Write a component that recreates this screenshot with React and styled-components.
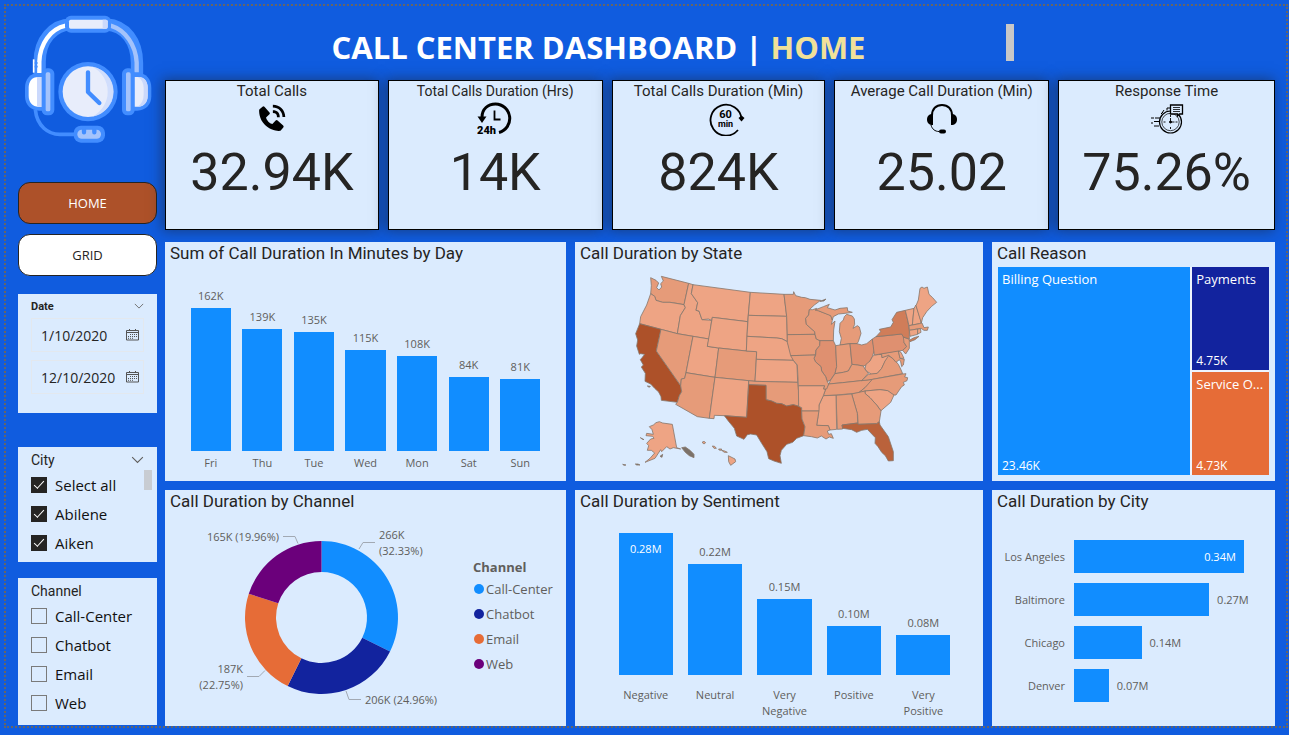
import React from "react";
import styled, { createGlobalStyle, css } from "styled-components";
import { BiSolidPhoneCall } from "react-icons/bi";

const c = {
  page: "#105cdf",
  panel: "#dbebfe",
  ink: "#252423",
  muted: "#605e5c",
  azure: "#118dff",
  navy: "#12239e",
  orange: "#e66c37",
  purple: "#6b007b",
  rust: "#ad5129",
};

const din = `Roboto, "Liberation Sans", sans-serif`;
const ui = `"Open Sans", "Noto Sans", sans-serif`;

const GlobalStyle = createGlobalStyle`
  *, *::before, *::after { box-sizing: border-box; }
  body { margin: 0; background: ${c.page}; font-family: ${ui}; color: ${c.ink}; }
  h1, h2, p, ul, fieldset { margin: 0; padding: 0; border: 0; min-width: 0; }
  ul { list-style: none; }
  svg { display: block; }
`;

const Page = styled.div`
  min-height: 100vh;
  padding: 4px 1px 7px 4px;
`;

const Frame = styled.div`
  display: flex;
  gap: 8px;
  border: 2px dotted #666566;
  padding: 0 11px 0 12px;
`;

/* ---------- sidebar ---------- */

const Sidebar = styled.aside`
  flex: none;
  width: 139px;
  display: flex;
  flex-direction: column;
`;

const LogoBox = styled.div`
  padding: 7px 5px 35px;
`;

const Nav = styled.nav`
  display: flex;
  flex-direction: column;
  gap: 10px;
  margin-bottom: 18px;
`;

const NavButton = styled.button`
  height: 42px;
  border: 1px solid ${c.ink};
  border-radius: 12px;
  font: 13px ${ui};
  cursor: pointer;
  background: ${(p) => (p.$active ? c.rust : "#fff")};
  color: ${(p) => (p.$active ? "#fff" : c.ink)};
`;

const Slicer = styled.fieldset`
  position: relative;
  margin-bottom: ${(p) => p.$gap || 0}px;
  padding: 3px 13px ${(p) => p.$bottom}px;
  background: ${c.panel};
`;

const SlicerHead = styled.div`
  display: flex;
  align-items: center;
  justify-content: space-between;
  height: ${(p) => (p.$small ? 18 : 20)}px;
  font: ${(p) => (p.$small ? "700 11px" : "400 14px")} ${din};
`;

const DateField = styled.label`
  display: flex;
  align-items: center;
  height: 34px;
  margin: 3px 0 8px;
  padding: 0 4px 0 9px;
  border: 1px solid #e3e8ee;
  &:last-child { margin-bottom: 0; }
`;

const DateInput = styled.input`
  flex: 1;
  width: 80px;
  min-width: 0;
  padding: 0;
  border: 0;
  background: none;
  font: 14px ${ui};
  color: ${c.ink};
`;

const Option = styled.label`
  display: flex;
  align-items: center;
  gap: 8px;
  height: 29px;
  font-size: 15px;
  color: #111;
  white-space: nowrap;
`;

const Check = styled.input`
  appearance: none;
  flex: none;
  display: grid;
  place-items: center;
  width: 16px;
  height: 16px;
  margin: 0;
  border: 1px solid #7a7a7a;
  &:checked { background: ${c.ink}; border-color: ${c.ink}; }
  &:checked::after {
    content: "";
    width: 10px;
    height: 5px;
    margin-bottom: 3px;
    border: solid #fff;
    border-width: 0 0 1px 1px;
    transform: rotate(-47deg);
  }
`;

const SlicerThumb = styled.span`
  position: absolute;
  top: 23px;
  right: 5px;
  width: 8px;
  height: 20px;
  background: #c8ccd2;
`;

/* ---------- main ---------- */

const Main = styled.main`
  flex: 1;
  min-width: 0;
`;

const Header = styled.header`
  display: flex;
  align-items: flex-start;
  justify-content: space-between;
  width: 61.5%;
  height: 74px;
  margin-left: 15%;
  padding-top: 18px;
`;

const Title = styled.h1`
  font: 700 31px/46px ${ui};
  color: #fff;
  white-space: nowrap;
`;

const Accent = styled.span`
  color: #f0e199;
`;

const TitleThumb = styled.span`
  width: 8px;
  height: 37px;
  background: #c8c8c8;
`;

const KpiRow = styled.section`
  display: grid;
  grid-template-columns: 214fr 215fr 214fr 215fr 217fr;
  gap: 9px;
  margin-bottom: 12px;
`;

const KpiCard = styled.article`
  display: flex;
  flex-direction: column;
  align-items: center;
  height: 150px;
  border: 1px solid #000;
  background: ${c.panel};
  box-shadow: -2px 0 12px 1px rgba(30, 34, 40, 0.5);
`;

const KpiTitle = styled.h2`
  font: 400 ${(p) => (p.$small ? 14 : 15)}px/20px ${din};
  white-space: nowrap;
`;

const KpiIcon = styled.div`
  display: grid;
  place-items: center;
  height: 35px;
  color: #000;
`;

const KpiValue = styled.p`
  font: 400 52px/74px ${din};
`;

const Panels = styled.section`
  display: grid;
  grid-template-columns: 401fr 408fr 283fr;
  grid-template-rows: minmax(239px, auto) minmax(236px, auto);
  gap: 9px;
`;

const PanelBox = styled.article`
  display: flex;
  flex-direction: column;
  min-width: 0;
  background: ${c.panel};
`;

const PanelTitle = styled.h2`
  padding: 0 5px;
  font: 400 17px/22px ${din};
`;

const Columns = styled.ul`
  display: flex;
  padding: ${(p) => p.$pad};
`;

const Column = styled.li`
  flex: 1;
  min-width: 0;
  font-size: 11px;
  line-height: 16px;
  text-align: center;
  color: ${c.muted};
`;

const Plot = styled.div`
  display: flex;
  flex-direction: column;
  justify-content: flex-end;
  align-items: center;
  height: ${(p) => p.$height}px;
`;

const ValueLabel = styled.span`
  margin-bottom: 4px;
`;

const Bar = styled.div`
  width: 78%;
  padding-top: 8px;
  background: ${c.azure};
  color: #fff;
`;

const AxisLabel = styled.div`
  margin-top: ${(p) => p.$gap}px;
  padding: 0 4px;
`;

const MapBox = styled.div`
  padding: 1px 33px 0 45px;
`;

const Treemap = styled.div`
  flex: 1;
  display: grid;
  grid-template: 1fr 1fr / 193fr 77fr;
  gap: 2px;
  margin: 3px 6px 6px;
  background: #eef4fd;
`;

const Tile = styled.div`
  display: flex;
  flex-direction: column;
  justify-content: space-between;
  min-width: 0;
  padding: 2px 4px 0;
  background: ${(p) => p.$color};
  color: #fff;
  font-size: 12px;
  line-height: 18px;
  ${(p) => p.$tall && css`grid-row: span 2;`}
`;

const TileName = styled.span`
  font-size: 13px;
  line-height: 20px;
  white-space: nowrap;
`;

const DonutBody = styled.div`
  display: flex;
  color: ${c.muted};
`;

const Legend = styled.div`
  padding: 46px 0 0 8px;
  font-size: 13px;
  line-height: 18px;
`;

const LegendTitle = styled.p`
  font-weight: 700;
`;

const LegendItem = styled.li`
  display: flex;
  align-items: center;
  gap: 2px;
  height: 25px;
  white-space: nowrap;
  &::before {
    content: "";
    width: 10px;
    height: 10px;
    margin-left: 1px;
    border-radius: 50%;
    background: ${(p) => p.$color};
  }
`;

const Rows = styled.ul`
  display: flex;
  flex-direction: column;
  gap: 10px;
  padding: 28px 8px 0 0;
`;

const Row = styled.li`
  display: grid;
  grid-template-columns: 73px 1fr;
  gap: 9px;
  align-items: center;
  height: 33px;
  font-size: 11px;
  color: ${c.muted};
`;

const RowName = styled.span`
  text-align: right;
  white-space: nowrap;
`;

const Track = styled.div`
  display: flex;
  align-items: center;
  gap: 8px;
`;

const RowBar = styled.div`
  flex: none;
  height: 33px;
  padding-right: 8px;
  line-height: 33px;
  text-align: right;
  color: #fff;
  background: ${c.azure};
`;

/* ---------- drawings ---------- */

const Logo = () => (
  <svg width="130" height="134" viewBox="70 40 390 402" aria-hidden="true">
    <g fill="none" strokeLinecap="butt">
      <path d="M120 224V186C120 122 160 75 215 74H320C378 78 412 126 412 190V224" stroke="#428dff" strokeWidth="37" />
      <path d="M119 220V186C121 132 152 88 198 78" stroke="#fff" strokeWidth="13" />
      <path d="M411 218V188C408 136 378 92 333 78" stroke="#a4c3fb" strokeWidth="13" />
      <path d="M107 330C112 380 146 404 180 404H230" stroke="#428dff" strokeWidth="11" />
      <path d="M102 179V219" stroke="#fff" strokeWidth="5" />
      <path d="M105 190H114M105 201H114" stroke="#428dff" strokeWidth="5" />
    </g>
    <rect x="196" y="48" width="138" height="51" rx="18" fill="#428dff" />
    <rect x="208" y="60" width="116" height="27" rx="5" fill="#e8edfb" />
    <path d="M309 60h10q5 0 5 5v17q0 5-5 5h-10z" fill="#cbd9fc" />
    <path d="M131 220H118C92 220 76 238 76 264v26c0 26 18 43 42 43h13z" fill="#428dff" />
    <path d="M128 232H116C96 232 87 246 87 264v24c0 20 12 33 29 33h12z" fill="#fff" />
    <path d="M128 232h-16v89h16z" fill="#cbd9fc" />
    <rect x="126" y="206" width="38" height="141" rx="16" fill="#428dff" />
    <rect x="138" y="218" width="14" height="117" rx="5" fill="#a4c3fb" />
    <path d="M400 220h13c26 0 42 18 42 44v26c0 26-18 43-42 43h-13z" fill="#428dff" />
    <path d="M404 232h11c20 0 29 14 29 32v24c0 20-12 33-29 33h-11z" fill="#e8edfb" />
    <path d="M415 232c20 0 29 14 29 32v24c0 20-12 33-29 33 11-8 17-20 17-37v-18c0-16-6-27-17-34z" fill="#cbd9fc" />
    <rect x="367" y="206" width="38" height="141" rx="16" fill="#428dff" />
    <rect x="379" y="218" width="14" height="117" rx="5" fill="#a4c3fb" />
    <circle cx="265" cy="276" r="89" fill="#428dff" />
    <circle cx="265" cy="276" r="76" fill="#e8edfb" />
    <path d="M278 201a76 76 0 0 1 0 150a84 84 0 0 0 0-150" fill="#cbd9fc" opacity=".8" />
    <path d="M265 218v59l34 33" fill="none" stroke="#428dff" strokeWidth="13" strokeLinecap="round" strokeLinejoin="round" />
    <rect x="222" y="378" width="94" height="51" rx="22" fill="#428dff" />
    <rect x="233" y="390" width="71" height="27" rx="13" fill="#a4c3fb" />
    <path d="M253 387v11M284 387v11" stroke="#428dff" strokeWidth="13" strokeLinecap="round" />
  </svg>
);

const Chevron = ({ size }) => (
  <svg width={size} height={size / 2 + 1} viewBox="0 0 12 7" fill="none" stroke="#605e5c" aria-hidden="true">
    <path d="M1 1l5 5 5-5" />
  </svg>
);

const Calendar = () => (
  <svg width="13" height="12" viewBox="0 0 13 12" fill="none" stroke="#555" aria-hidden="true">
    <path d="M.5 1.500h12v9.500H.5zM.5 3.500h12M3.500 0v2M9.500 0v2" />
    <path d="M4 5.500h7M2 7.500h9M2 9.300h6" strokeDasharray="1 1" />
  </svg>
);

const Day24Icon = () => (
  <svg width="36" height="36" viewBox="0 0 36 36" aria-hidden="true">
    <path d="M5 16C5 8 11 3 18.500 3A14.500 14.500 0 0 1 22 31.500" fill="none" stroke="#000" strokeWidth="3" />
    <path d="M.5 15.500h9L5 22z" />
    <path d="M17.500 9.500v9h6" fill="none" stroke="#000" strokeWidth="1.800" />
    <text x="0" y="33" fontFamily={din} fontWeight="900" fontSize="11">24h</text>
  </svg>
);

/* The artwork sits in the right part of a wider canvas, as in the card's source image. */
const Min60Icon = () => (
  <svg width="54" height="34" viewBox="-18 0 54 34" aria-hidden="true">
    <path d="M29 28A15.500 15.500 0 1 1 32.500 17" fill="none" stroke="#000" strokeWidth="1.800" />
    <path d="M29.500 16l3-2.500 3 2.500-3 3.500z" />
    <g fontFamily={din} fontWeight="700" textAnchor="middle">
      <text x="16.500" y="16" fontSize="11">60</text>
      <text x="16.500" y="25" fontSize="9">min</text>
    </g>
  </svg>
);

const HeadsetIcon = () => (
  <svg width="32" height="30" viewBox="0 0 32 30" aria-hidden="true">
    <path d="M6 13V11.500C6 5 10 1 16 1s10 4 10 10.500V13" fill="none" stroke="#000" strokeWidth="2" />
    <path d="M7 10v11C3 21 1 19 1 15.500S3 10 7 10zM25 10v11c4 0 6-2 6-5.500S29 10 25 10z" />
    <path d="M5 21c1 4 4 6.500 8 6.500" fill="none" stroke="#000" strokeWidth="1" />
    <rect x="13" y="25.500" width="7" height="4" rx="2" />
  </svg>
);

const StopwatchIcon = () => (
  <svg width="34" height="30" viewBox="0 0 34 30" fill="none" stroke="#000" aria-hidden="true">
    <circle cx="20.500" cy="18" r="11" strokeWidth="1.200" />
    <circle cx="20.500" cy="18" r="8.700" strokeWidth=".7" />
    <path d="M20.500 11v2M20.500 23v2M13.500 18h2M25.500 18h2M20.500 14v4h4" strokeWidth=".9" />
    <circle cx="20.500" cy="18" r="1" fill="#000" />
    <path d="M11 10l2-2M14 6l-2 3M17 6.500V4h3M1 14h3m1 0h5M4 17.500h5M1 19h2M4 22h5" strokeWidth="1" />
    <path d="M20.500 1h12v9h-3l-2 2v-2h-7z" fill={c.panel} strokeWidth="1.300" />
    <path d="M23 3.500h7M23 5.500h7M23 7.500h7" strokeWidth=".8" />
  </svg>
);

const light = "#eea484";
const mid = "#e69b79";
const deep = "#df9070";

/* Outlines of the states in map units, with the tone of each. */
const states = [
  [mid, "92,38 108,46 116,54 110,68 117,75 125,66 122,56 130,48 124,34 206,55 192,119 170,115 150,112 128,112 108,106 104,94 92,86 94,62"],
  [light, "92,86 104,94 108,106 128,112 150,112 192,119 196,128 181,152 172,206 123,193 59,176 62,155 80,120"],
  [c.rust, "59,176 123,193 109,258 182,362 185,380 178,392 172,412 124,406 123,395 116,381 104,370 92,357 75,349 76,325 64,306 70,300 61,284 66,278 74,268 62,266 58,268 50,243 53,225 47,206"],
  [light, "206,55 219,59 214,86 233,113 228,136 237,138 246,164 275,166 267,222 219,214 172,206 181,152 196,128 192,119"],
  [mid, "123,193 172,206 219,214 198,323 194,340 184,342 182,362 109,258"],
  [light, "219,214 267,222 262,244 296,249 285,337 198,323"],
  [mid, "198,323 285,337 268,460 232,455 167,418 172,412 178,392 185,380 182,362 184,342 194,340"],
  [light, "219,59 391,82 383,170 277,157 275,166 265,162 246,164 237,138 228,136 233,113 214,86"],
  [light, "277,157 383,170 379,258 296,249 262,244"],
  [mid, "296,249 379,258 410,260 405,349 285,337"],
  [light, "285,337 386,347 380,457 313,452 283,451 282,461 268,460"],
  [light, "391,82 492,88 500,154 385,151"],
  [light, "385,151 500,154 502,230 495,226 485,221 470,219 381,214"],
  [light, "381,214 470,219 485,221 502,230 512,260 520,286 409,283 410,260 379,258"],
  [light, "409,283 520,286 531,300 533,352 405,349"],
  [mid, "386,347 405,349 533,352 537,390 536,424 520,419 500,423 485,416 470,415 455,408 438,404 438,361 386,359"],
  [c.rust, "386,359 438,361 438,404 455,408 470,415 485,416 500,423 520,419 536,424 545,428 546,462 555,485 551,512 530,520 518,532 500,538 484,556 480,572 484,595 462,588 446,581 441,560 425,535 410,510 392,507 382,509 372,523 350,513 343,490 325,468 313,452 380,457"],
  [mid, "492,88 520,88 521,80 527,92 545,97 556,98 570,103 602,106 583,120 568,134 566,150 557,160 559,178 584,200 585,208 502,209 500,154"],
  [mid, "502,209 585,208 589,222 600,227 599,242 588,255 586,270 512,272 502,232"],
  [mid, "568,134 578,134 590,130 597,138 625,148 634,154 637,166 634,178 645,168 641,195 640,227 600,227 589,222 585,208 584,200 559,178 557,160 566,150"],
  [mid, "585,135 610,125 628,118 622,128 645,135 660,130 682,128 683,138 697,142 675,145 655,147 640,155 637,165 632,152 597,138"],
  [mid, "680,148 697,153 703,162 704,178 699,190 712,182 718,186 723,205 715,230 711,236 690,236 660,240 664,220 658,200 660,175 670,165 673,155"],
  [deep, "600,227 640,227 647,242 650,305 645,325 632,345 622,350 617,335 605,318 603,305 586,290 582,280 587,270 588,255 599,242"],
  [mid, "647,242 660,240 690,236 696,298 685,318 670,322 645,326 650,305"],
  [deep, "690,236 711,236 725,240 740,236 757,222 763,255 757,275 745,298 730,303 712,300 696,298"],
  [mid, "645,326 670,322 685,318 696,298 712,300 730,303 738,317 745,325 725,347 668,353 626,357 632,345"],
  [mid, "626,357 668,353 758,343 750,355 735,368 715,384 650,390 610,392 617,372"],
  [light, "763,270 785,268 786,278 804,270 810,274 798,285 785,310 772,325 755,328 742,320 735,312 738,298 750,288 757,275"],
  [mid, "725,347 745,328 772,325 785,310 795,288 806,272 822,283 835,298 842,312 848,326 758,343"],
  [mid, "778,267 835,257 840,280 853,283 850,300 845,305 842,290 838,284 828,292 818,280 806,271 786,278 785,268"],
  [light, "835,257 843,262 852,280 840,280"],
  [deep, "757,222 768,215 845,207 857,220 852,232 860,245 848,256 763,270"],
  [mid, "850,216 868,223 868,250 857,267 848,256 860,245 852,232"],
  ["#d07d59", "768,215 782,200 778,193 812,186 820,172 816,164 830,142 856,136 863,165 868,195 868,222 850,216 845,207"],
  ["#d07d59", "868,226 880,219 892,215 897,214 885,224 870,230"],
  [light, "856,136 882,130 880,150 877,180 867,182 863,165"],
  [light, "882,130 888,120 904,172 898,176 877,180 880,150"],
  [light, "888,122 895,105 900,70 906,66 912,70 922,66 927,88 938,98 950,112 935,124 920,140 908,158 904,174"],
  [mid, "867,182 898,176 906,174 912,188 925,186 922,196 912,196 903,190 868,196"],
  [light, "868,196 893,192 893,208 870,214"],
  [light, "893,192 901,191 903,202 893,207"],
  [mid, "757,343 848,327 858,326 854,336 863,338 861,347 850,352 853,360 845,365 836,378 828,390 820,390 803,377 780,374 735,378 715,384 735,368"],
  [light, "735,378 780,374 803,377 822,390 812,412 783,437 770,420 750,398 735,385"],
  [mid, "695,387 735,378 735,385 750,398 770,420 783,438 778,470 770,476 714,478 713,450"],
  [mid, "648,391 695,387 712,445 713,474 666,480 668,492 652,493"],
  [light, "610,392 648,391 650,493 630,495 625,482 590,481 594,455 597,420"],
  [light, "535,362 614,362 611,372 617,372 610,392 597,420 597,438 545,438 545,428 536,424"],
  [mid, "545,438 597,438 594,455 590,481 625,482 630,495 622,498 626,508 634,506 640,520 628,516 618,522 604,513 592,519 574,515 551,512 555,485 546,462"],
  [mid, "512,272 586,270 582,280 586,290 603,305 605,318 617,335 622,350 626,357 620,372 611,372 614,362 535,362 532,300 520,286"],
  ["#ba623b", "666,480 713,474 714,478 770,476 778,470 780,480 805,515 820,560 820,587 805,588 796,572 785,562 774,545 765,535 766,518 742,493 725,496 710,502 695,494 668,490"],
  [light, "88,485 100,480 108,473 118,470 128,474 157,478 170,548 182,552 160,548 150,552 140,545 125,560 122,554 105,580 75,592 90,580 104,564 94,556 82,556 86,542 80,535 92,522 102,520 98,514 78,512 80,505 100,508 96,494"],
  ["#7b7169", "185,548 196,546 210,556 222,568 222,578 208,572 196,562"],
  [light, "325,572 345,582 347,590 332,601 326,590"],
  [light, "246,532 252,529 257,533 252,537"],
  [light, "277,543 284,544 289,550 282,550"],
  [light, "296,552 305,552 304,556 297,555"],
  [light, "305,556 314,558 322,562 313,562"],
  ["#7b7169", "600,109 618,102 612,108"],
  ["#7b7169", "82,363 91,364 88,367"],
  ["#7b7169", "46,597 54,597 60,600 50,600"],
  ["#7b7169", "61,518 72,524 66,522"],
  ["#7b7169", "8,598 18,600 12,601"],
  ["#7b7169", "120,574 128,568 126,577"],
];

const UsMap = () => (
  <svg viewBox="0 0 990 615" width="100%" role="img" aria-label="Call duration by state">
    <g stroke="#85766b" strokeWidth="2.400" strokeLinejoin="round">
      {states.map(([fill, points], i) => (
        <polygon key={i} fill={fill} points={points} />
      ))}
    </g>
  </svg>
);

const channels = [
  { name: "Call-Center", share: 32.33, color: c.azure },
  { name: "Chatbot", share: 24.96, color: c.navy },
  { name: "Email", share: 22.75, color: c.orange },
  { name: "Web", share: 19.96, color: c.purple },
];

const Donut = () => {
  const cx = 156.5, cy = 105.5, R = 76.5, r = 45.5;
  let start = 0;
  const at = (radius, share) => {
    const a = (share / 100) * Math.PI * 2;
    return `${cx + radius * Math.sin(a)} ${cy - radius * Math.cos(a)}`;
  };
  return (
    <svg width="300" height="210" viewBox="0 0 300 210" role="img" aria-label="Call duration by channel">
      {channels.map((ch) => {
        const a = start;
        const b = (start += ch.share);
        return (
          <path key={ch.name} fill={ch.color} d={`M${at(R, a)}A${R} ${R} 0 0 1 ${at(R, b)}L${at(r, b)}A${r} ${r} 0 0 0 ${at(r, a)}Z`} />
        );
      })}
      <g fill="none" stroke="#a2a9b3">
        <path d="M194 37l4-6.500h12M118 24.500h12l3 7M82 164.500h12l6-6M181 179l3 8.500h12" />
      </g>
      <g fill={c.muted} fontFamily={ui} fontSize="11">
        <text x="214" y="27">266K</text>
        <text x="214" y="43">(32.33%)</text>
        <text x="114" y="29" textAnchor="end">165K (19.96%)</text>
        <text x="78" y="161" textAnchor="end">187K</text>
        <text x="78" y="177" textAnchor="end">(22.75%)</text>
        <text x="200" y="192">206K (24.96%)</text>
      </g>
    </svg>
  );
};

/* ---------- data ---------- */

const kpis = [
  { title: "Total Calls", value: "32.94K", icon: <BiSolidPhoneCall size={33} /> },
  { title: "Total Calls Duration (Hrs)", value: "14K", icon: <Day24Icon />, small: true },
  { title: "Total Calls Duration (Min)", value: "824K", icon: <Min60Icon /> },
  { title: "Average Call Duration (Min)", value: "25.02", icon: <HeadsetIcon /> },
  { title: "Response Time", value: "75.26%", icon: <StopwatchIcon /> },
];

const days = [
  ["Fri", "162K", 143], ["Thu", "139K", 122], ["Tue", "135K", 119], ["Wed", "115K", 101],
  ["Mon", "108K", 95], ["Sat", "84K", 74], ["Sun", "81K", 72],
];

const sentiments = [
  ["Negative", "0.28M", 142], ["Neutral", "0.22M", 111], ["Very Negative", "0.15M", 76],
  ["Positive", "0.10M", 49], ["Very Positive", "0.08M", 40],
];

const cities = [
  ["Los Angeles", "0.34M", 88], ["Baltimore", "0.27M", 70], ["Chicago", "0.14M", 35], ["Denver", "0.07M", 18],
];

const Panel = ({ title, children }) => (
  <PanelBox>
    <PanelTitle>{title}</PanelTitle>
    {children}
  </PanelBox>
);

const ColumnChart = ({ data, height, pad, axisGap, insideFirst }) => (
  <Columns $pad={pad}>
    {data.map(([name, label, size], i) => {
      const inside = insideFirst && i === 0;
      return (
        <Column key={name}>
          <Plot $height={height}>
            {!inside && <ValueLabel>{label}</ValueLabel>}
            <Bar style={{ height: size }}>{inside && label}</Bar>
          </Plot>
          <AxisLabel $gap={axisGap}>{name}</AxisLabel>
        </Column>
      );
    })}
  </Columns>
);

export default function App() {
  return (
    <Page>
      <GlobalStyle />
      <Frame>
        <Sidebar>
          <LogoBox><Logo /></LogoBox>
          <Nav>
            <NavButton type="button" $active>HOME</NavButton>
            <NavButton type="button">GRID</NavButton>
          </Nav>
          <Slicer $gap={34} $bottom={19} aria-label="Date">
            <SlicerHead $small>Date<Chevron size={10} /></SlicerHead>
            {["1/10/2020", "12/10/2020"].map((d, i) => (
              <DateField key={d}>
                <DateInput type="text" defaultValue={d} aria-label={i ? "End date" : "Start date"} />
                <Calendar />
              </DateField>
            ))}
          </Slicer>
          <Slicer $gap={16} $bottom={5} aria-label="City">
            <SlicerHead>City<Chevron size={13} /></SlicerHead>
            {["Select all", "Abilene", "Aiken"].map((n) => (
              <Option key={n}><Check type="checkbox" defaultChecked />{n}</Option>
            ))}
            <SlicerThumb />
          </Slicer>
          <Slicer $bottom={8} aria-label="Channel">
            <SlicerHead>Channel</SlicerHead>
            {channels.map(({ name }) => (
              <Option key={name}><Check type="checkbox" />{name}</Option>
            ))}
          </Slicer>
        </Sidebar>
        <Main>
          <Header>
            <Title>CALL CENTER DASHBOARD | <Accent>HOME</Accent></Title>
            <TitleThumb />
          </Header>
          <KpiRow>
            {kpis.map((k) => (
              <KpiCard key={k.title}>
                <KpiTitle $small={k.small}>{k.title}</KpiTitle>
                <KpiIcon>{k.icon}</KpiIcon>
                <KpiValue>{k.value}</KpiValue>
              </KpiCard>
            ))}
          </KpiRow>
          <Panels>
            <Panel title="Sum of Call Duration In Minutes by Day">
              <ColumnChart data={days} height={187} pad="0 20px" axisGap={4} />
            </Panel>
            <Panel title="Call Duration by State">
              <MapBox><UsMap /></MapBox>
            </Panel>
            <Panel title="Call Reason">
              <Treemap>
                <Tile $tall $color={c.azure}><TileName>Billing Question</TileName>23.46K</Tile>
                <Tile $color={c.navy}><TileName>Payments</TileName>4.75K</Tile>
                <Tile $color={c.orange}><TileName>Service O...</TileName>4.73K</Tile>
              </Treemap>
            </Panel>
            <Panel title="Call Duration by Channel">
              <DonutBody>
                <Donut />
                <Legend>
                  <LegendTitle>Channel</LegendTitle>
                  <ul>
                    {channels.map((ch) => (
                      <LegendItem key={ch.name} $color={ch.color}>{ch.name}</LegendItem>
                    ))}
                  </ul>
                </Legend>
              </DonutBody>
            </Panel>
            <Panel title="Call Duration by Sentiment">
              <ColumnChart data={sentiments} height={163} pad="0 25px 0 36px" axisGap={12} insideFirst />
            </Panel>
            <Panel title="Call Duration by City">
              <Rows>
                {cities.map(([name, label, pct], i) => (
                  <Row key={name}>
                    <RowName>{name}</RowName>
                    <Track>
                      <RowBar style={{ width: `${pct}%` }}>{i === 0 && label}</RowBar>
                      {i > 0 && label}
                    </Track>
                  </Row>
                ))}
              </Rows>
            </Panel>
          </Panels>
        </Main>
      </Frame>
    </Page>
  );
}
